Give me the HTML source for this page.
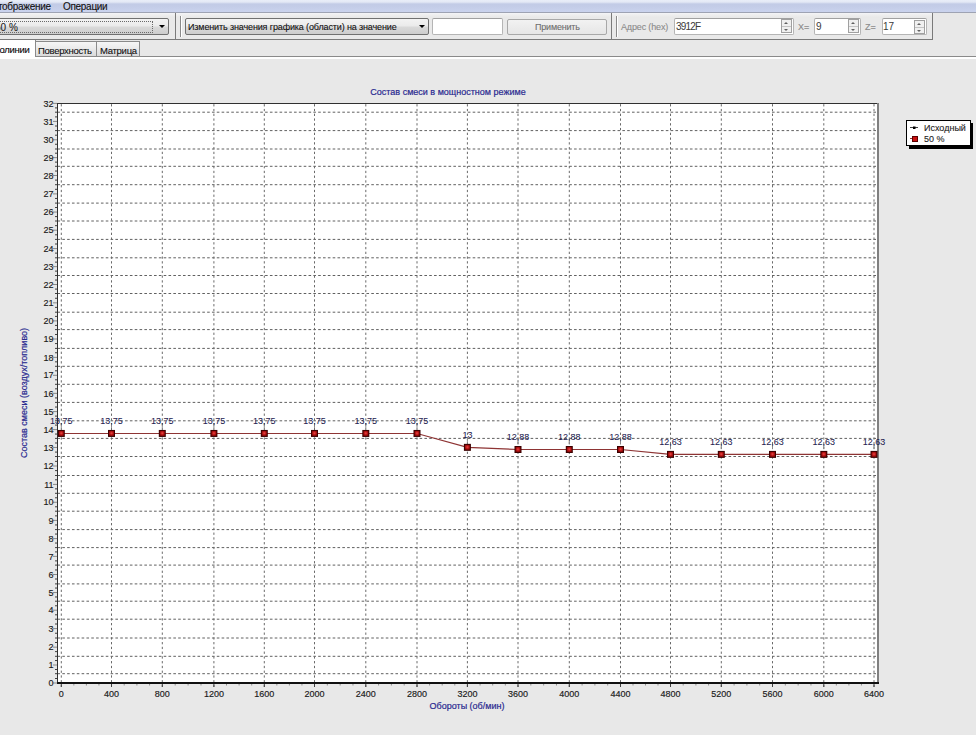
<!DOCTYPE html>
<html><head><meta charset="utf-8">
<style>
*{margin:0;padding:0;box-sizing:border-box}
html,body{width:976px;height:735px;overflow:hidden;background:#e8e8e8;font-family:"Liberation Sans", sans-serif;}
.abs{position:absolute}
#menu{position:absolute;left:0;top:0;width:976px;height:13px;background:linear-gradient(#e9eef8 0,#e4e9f5 2px,#c2cbe6 4px,#c4cde8 7px,#cad3ee 12px);border-bottom:1px solid #9ea3b3;}
.mt{position:absolute;top:0.5px;font-size:10px;letter-spacing:-0.3px;line-height:12px;color:#111;-webkit-text-stroke:0.1px #111;white-space:nowrap}
#tb{position:absolute;left:0;top:13px;width:933px;height:27px;background:linear-gradient(#f4f5f8 0,#eeeeee 2px,#e9e9e9 4px,#e9e9e9);border-bottom:1px solid #7a7a7a;border-right:1px solid #7a7a7a}
.vsep{position:absolute;top:13px;width:1px;height:26px;background:#7a7a7a}
.grip{position:absolute;top:16px;width:2px;height:21px;border-left:1px solid #8a8a8a;border-right:1px solid #fff}
.combo{position:absolute;top:18px;height:17px;border:1px solid #707070;border-radius:2px;background:linear-gradient(#f3f3f3,#ebebeb 45%,#d9d9d9 55%,#cdcdcd)}
.arrow{position:absolute;width:0;height:0;border-left:3px solid transparent;border-right:3px solid transparent;border-top:3px solid #000}
.ut{position:absolute;font-size:9px;line-height:11px;white-space:nowrap;color:#111;-webkit-text-stroke:0.1px currentColor}
.edit{position:absolute;top:18px;height:17px;background:#fff;border:1px solid #b5b5b5;border-top-color:#a0a0a0;border-radius:2px}
.spinb{position:absolute;width:11px;height:14px;border:1px solid #a0a0a0;background:#f0f0f0}
.spinb:before{content:"";position:absolute;left:0;top:6px;width:9px;height:1px;background:#c4c4c4}
.au{position:absolute;left:2px;top:2px;width:0;height:0;border-left:2.5px solid transparent;border-right:2.5px solid transparent;border-bottom:2.5px solid #606060}
.ad{position:absolute;left:2px;top:8.5px;width:0;height:0;border-left:2.5px solid transparent;border-right:2.5px solid transparent;border-top:2.5px solid #606060}
.tab{position:absolute;height:15px;border:1px solid #8a8a8a;border-bottom:none;background:linear-gradient(#f6f6f6,#ececec 40%,#dadada)}
svg text{font-family:"Liberation Sans", sans-serif}
.g{stroke:#606060;stroke-width:1;stroke-dasharray:2.6 2.228;}
.gv{stroke:#6a6a6a;stroke-width:1;stroke-dasharray:2.3 2.46;}
.yl{font-size:9px;fill:#1a1a1a;stroke:#1a1a1a;stroke-width:0.15px;text-anchor:end}
.xl{font-size:9px;fill:#1a1a1a;stroke:#1a1a1a;stroke-width:0.15px;text-anchor:middle}
.ml{font-size:9px;fill:#1e2250;stroke:#1e2250;stroke-width:0.05px;text-anchor:middle}
.t{font-size:9px;fill:#2a2a90;stroke:#2a2a90;stroke-width:0.2px;text-anchor:middle}
.lg{font-size:9px;fill:#222;stroke:#222;stroke-width:0.1px}
</style></head><body>
<div id="menu">
  <div class="mt" style="left:-9.6px">Отображение</div>
  <div class="mt" style="left:63px">Операции</div>
</div>
<div id="tb"></div>
<!-- band 1 -->
<div class="combo" style="left:-4px;width:173px"></div>
<div class="abs" style="left:-2px;top:21px;width:155px;height:12px;border:1px dotted #6a6a6a"></div>
<div class="ut" style="left:-5px;top:22.3px;font-size:10px;color:#222">50 %</div>
<div class="arrow" style="left:159px;top:25px"></div>
<div class="vsep" style="left:175px"></div>
<!-- band 2 -->
<div class="grip" style="left:180px"></div>
<div class="combo" style="left:185px;width:244px"></div>
<div class="ut" style="left:188px;top:22px;letter-spacing:-0.13px">Изменить значения графика (области) на значение</div>
<div class="arrow" style="left:419px;top:25px"></div>
<div class="edit" style="left:432px;width:71px"></div>
<div class="combo" style="left:507px;width:100px;top:19px;height:16px;border-color:#a8a8a8;background:linear-gradient(#f2f2f2,#e6e6e6)"></div>
<div class="ut" style="left:535px;top:22px;color:#6d6d6d;letter-spacing:-0.2px">Применить</div>
<div class="vsep" style="left:611px"></div>
<!-- band 3 -->
<div class="grip" style="left:616px"></div>
<div class="ut" style="left:621px;top:21.5px;color:#8a8a8a;letter-spacing:-0.15px">Адрес (hex)</div>
<div class="edit" style="left:674px;width:120px"></div>
<div class="ut" style="left:676px;top:20.7px;font-size:10px;color:#3a3a3a;letter-spacing:-0.8px;-webkit-text-stroke:0">3912F</div>
<div class="spinb" style="left:781px;top:19px"><i class="au"></i><i class="ad"></i></div>
<div class="ut" style="left:798px;top:21.5px;color:#8a8a8a">X=</div>
<div class="edit" style="left:814px;width:47px"></div>
<div class="ut" style="left:816px;top:20.7px;font-size:10px;color:#3a3a3a;-webkit-text-stroke:0">9</div>
<div class="spinb" style="left:848px;top:19px"><i class="au"></i><i class="ad"></i></div>
<div class="ut" style="left:865px;top:21.5px;color:#8a8a8a">Z=</div>
<div class="edit" style="left:882px;width:45px"></div>
<div class="ut" style="left:883px;top:20.7px;font-size:10px;color:#3a3a3a;-webkit-text-stroke:0">17</div>
<div class="spinb" style="left:914px;top:20px"><i class="au"></i><i class="ad"></i></div>
<!-- tabs -->
<div class="abs" style="left:0;top:56px;width:976px;height:1px;background:#8a8a8a"></div>
<div class="abs" style="left:0;top:57px;width:976px;height:2px;background:#fff"></div>
<div class="tab" style="left:35px;top:41px;width:62px"></div>
<div class="tab" style="left:96px;top:41px;width:44px"></div>
<div class="abs" style="left:0;top:40px;width:35px;height:19px;background:#fff"></div>
<div class="abs" style="left:35px;top:40px;width:1px;height:17px;background:#8a8a8a"></div>
<div class="ut" style="left:-11px;top:44px;color:#000;font-size:9.5px;letter-spacing:-0.28px">Изолинии</div>
<div class="ut" style="left:38px;top:44.5px;font-size:9.5px;letter-spacing:-0.28px">Поверхность</div>
<div class="ut" style="left:100px;top:44.5px;font-size:9.5px;letter-spacing:-0.28px">Матрица</div>
<svg class="abs" style="left:0;top:0" width="976" height="735" viewBox="0 0 976 735">
<rect x="58" y="104" width="820" height="579" fill="#ffffff"/>
<line x1="57.47" y1="673.70" x2="877" y2="673.70" class="g"/>
<line x1="57.47" y1="656.30" x2="877" y2="656.30" class="g"/>
<line x1="57.47" y1="638.00" x2="877" y2="638.00" class="g"/>
<line x1="57.47" y1="619.20" x2="877" y2="619.20" class="g"/>
<line x1="57.47" y1="601.20" x2="877" y2="601.20" class="g"/>
<line x1="57.47" y1="583.90" x2="877" y2="583.90" class="g"/>
<line x1="57.47" y1="565.10" x2="877" y2="565.10" class="g"/>
<line x1="57.47" y1="547.60" x2="877" y2="547.60" class="g"/>
<line x1="57.47" y1="529.60" x2="877" y2="529.60" class="g"/>
<line x1="57.47" y1="511.20" x2="877" y2="511.20" class="g"/>
<line x1="57.47" y1="493.30" x2="877" y2="493.30" class="g"/>
<line x1="57.47" y1="475.50" x2="877" y2="475.50" class="g"/>
<line x1="57.47" y1="456.50" x2="877" y2="456.50" class="g"/>
<line x1="57.47" y1="438.40" x2="877" y2="438.40" class="g"/>
<line x1="57.47" y1="420.80" x2="877" y2="420.80" class="g"/>
<line x1="57.47" y1="402.40" x2="877" y2="402.40" class="g"/>
<line x1="57.47" y1="384.30" x2="877" y2="384.30" class="g"/>
<line x1="57.47" y1="366.30" x2="877" y2="366.30" class="g"/>
<line x1="57.47" y1="348.40" x2="877" y2="348.40" class="g"/>
<line x1="57.47" y1="329.60" x2="877" y2="329.60" class="g"/>
<line x1="57.47" y1="312.20" x2="877" y2="312.20" class="g"/>
<line x1="57.47" y1="293.50" x2="877" y2="293.50" class="g"/>
<line x1="57.47" y1="275.50" x2="877" y2="275.50" class="g"/>
<line x1="57.47" y1="257.80" x2="877" y2="257.80" class="g"/>
<line x1="57.47" y1="239.40" x2="877" y2="239.40" class="g"/>
<line x1="57.47" y1="221.00" x2="877" y2="221.00" class="g"/>
<line x1="57.47" y1="203.10" x2="877" y2="203.10" class="g"/>
<line x1="57.47" y1="184.70" x2="877" y2="184.70" class="g"/>
<line x1="57.47" y1="166.30" x2="877" y2="166.30" class="g"/>
<line x1="57.47" y1="149.00" x2="877" y2="149.00" class="g"/>
<line x1="57.47" y1="130.60" x2="877" y2="130.60" class="g"/>
<line x1="57.47" y1="112.20" x2="877" y2="112.20" class="g"/>
<line x1="61.30" y1="104.15" x2="61.30" y2="687" class="gv"/>
<line x1="111.50" y1="104.15" x2="111.50" y2="687" class="gv"/>
<line x1="162.30" y1="104.15" x2="162.30" y2="687" class="gv"/>
<line x1="213.90" y1="104.15" x2="213.90" y2="687" class="gv"/>
<line x1="264.30" y1="104.15" x2="264.30" y2="687" class="gv"/>
<line x1="314.50" y1="104.15" x2="314.50" y2="687" class="gv"/>
<line x1="365.80" y1="104.15" x2="365.80" y2="687" class="gv"/>
<line x1="417.00" y1="104.15" x2="417.00" y2="687" class="gv"/>
<line x1="467.40" y1="104.15" x2="467.40" y2="687" class="gv"/>
<line x1="518.00" y1="104.15" x2="518.00" y2="687" class="gv"/>
<line x1="569.30" y1="104.15" x2="569.30" y2="687" class="gv"/>
<line x1="620.50" y1="104.15" x2="620.50" y2="687" class="gv"/>
<line x1="670.50" y1="104.15" x2="670.50" y2="687" class="gv"/>
<line x1="721.30" y1="104.15" x2="721.30" y2="687" class="gv"/>
<line x1="772.50" y1="104.15" x2="772.50" y2="687" class="gv"/>
<line x1="823.80" y1="104.15" x2="823.80" y2="687" class="gv"/>
<line x1="874.00" y1="104.15" x2="874.00" y2="687" class="gv"/>
<line x1="57" y1="103.5" x2="879" y2="103.5" stroke="#303030" stroke-width="1"/>
<rect x="877" y="103" width="2" height="580" fill="#808080"/>
<line x1="57.5" y1="103" x2="57.5" y2="684" stroke="#303030" stroke-width="1"/>
<rect x="57" y="682" width="822" height="2" fill="#101010"/>
<line x1="53" y1="683.00" x2="57" y2="683.00" stroke="#888888"/>
<line x1="55" y1="678.50" x2="57" y2="678.50" stroke="#404040"/>
<line x1="55" y1="673.70" x2="57" y2="673.70" stroke="#404040"/>
<line x1="55" y1="669.50" x2="57" y2="669.50" stroke="#404040"/>
<line x1="53" y1="665.00" x2="57" y2="665.00" stroke="#888888"/>
<line x1="55" y1="660.54" x2="57" y2="660.54" stroke="#404040"/>
<line x1="55" y1="656.30" x2="57" y2="656.30" stroke="#404040"/>
<line x1="55" y1="651.61" x2="57" y2="651.61" stroke="#404040"/>
<line x1="53" y1="647.15" x2="57" y2="647.15" stroke="#888888"/>
<line x1="55" y1="642.51" x2="57" y2="642.51" stroke="#404040"/>
<line x1="55" y1="638.00" x2="57" y2="638.00" stroke="#404040"/>
<line x1="55" y1="633.24" x2="57" y2="633.24" stroke="#404040"/>
<line x1="53" y1="628.60" x2="57" y2="628.60" stroke="#888888"/>
<line x1="55" y1="624.00" x2="57" y2="624.00" stroke="#404040"/>
<line x1="55" y1="619.20" x2="57" y2="619.20" stroke="#404040"/>
<line x1="55" y1="614.80" x2="57" y2="614.80" stroke="#404040"/>
<line x1="53" y1="610.20" x2="57" y2="610.20" stroke="#888888"/>
<line x1="55" y1="605.79" x2="57" y2="605.79" stroke="#404040"/>
<line x1="55" y1="601.20" x2="57" y2="601.20" stroke="#404040"/>
<line x1="55" y1="596.96" x2="57" y2="596.96" stroke="#404040"/>
<line x1="53" y1="592.55" x2="57" y2="592.55" stroke="#888888"/>
<line x1="55" y1="588.04" x2="57" y2="588.04" stroke="#404040"/>
<line x1="55" y1="583.90" x2="57" y2="583.90" stroke="#404040"/>
<line x1="55" y1="579.01" x2="57" y2="579.01" stroke="#404040"/>
<line x1="53" y1="574.50" x2="57" y2="574.50" stroke="#888888"/>
<line x1="55" y1="569.96" x2="57" y2="569.96" stroke="#404040"/>
<line x1="55" y1="565.10" x2="57" y2="565.10" stroke="#404040"/>
<line x1="55" y1="560.89" x2="57" y2="560.89" stroke="#404040"/>
<line x1="53" y1="556.35" x2="57" y2="556.35" stroke="#888888"/>
<line x1="55" y1="551.91" x2="57" y2="551.91" stroke="#404040"/>
<line x1="55" y1="547.60" x2="57" y2="547.60" stroke="#404040"/>
<line x1="55" y1="543.04" x2="57" y2="543.04" stroke="#404040"/>
<line x1="53" y1="538.60" x2="57" y2="538.60" stroke="#888888"/>
<line x1="55" y1="534.05" x2="57" y2="534.05" stroke="#404040"/>
<line x1="55" y1="529.60" x2="57" y2="529.60" stroke="#404040"/>
<line x1="55" y1="524.95" x2="57" y2="524.95" stroke="#404040"/>
<line x1="53" y1="520.40" x2="57" y2="520.40" stroke="#888888"/>
<line x1="55" y1="515.86" x2="57" y2="515.86" stroke="#404040"/>
<line x1="55" y1="511.20" x2="57" y2="511.20" stroke="#404040"/>
<line x1="55" y1="506.79" x2="57" y2="506.79" stroke="#404040"/>
<line x1="53" y1="502.25" x2="57" y2="502.25" stroke="#888888"/>
<line x1="55" y1="497.79" x2="57" y2="497.79" stroke="#404040"/>
<line x1="55" y1="493.30" x2="57" y2="493.30" stroke="#404040"/>
<line x1="55" y1="488.86" x2="57" y2="488.86" stroke="#404040"/>
<line x1="53" y1="484.40" x2="57" y2="484.40" stroke="#888888"/>
<line x1="55" y1="479.80" x2="57" y2="479.80" stroke="#404040"/>
<line x1="55" y1="475.50" x2="57" y2="475.50" stroke="#404040"/>
<line x1="55" y1="470.60" x2="57" y2="470.60" stroke="#404040"/>
<line x1="53" y1="466.00" x2="57" y2="466.00" stroke="#888888"/>
<line x1="55" y1="461.36" x2="57" y2="461.36" stroke="#404040"/>
<line x1="55" y1="456.50" x2="57" y2="456.50" stroke="#404040"/>
<line x1="55" y1="452.09" x2="57" y2="452.09" stroke="#404040"/>
<line x1="53" y1="447.45" x2="57" y2="447.45" stroke="#888888"/>
<line x1="55" y1="442.99" x2="57" y2="442.99" stroke="#404040"/>
<line x1="55" y1="438.40" x2="57" y2="438.40" stroke="#404040"/>
<line x1="55" y1="434.06" x2="57" y2="434.06" stroke="#404040"/>
<line x1="53" y1="429.60" x2="57" y2="429.60" stroke="#888888"/>
<line x1="55" y1="425.10" x2="57" y2="425.10" stroke="#404040"/>
<line x1="55" y1="420.80" x2="57" y2="420.80" stroke="#404040"/>
<line x1="55" y1="416.10" x2="57" y2="416.10" stroke="#404040"/>
<line x1="53" y1="411.60" x2="57" y2="411.60" stroke="#888888"/>
<line x1="55" y1="407.04" x2="57" y2="407.04" stroke="#404040"/>
<line x1="55" y1="402.40" x2="57" y2="402.40" stroke="#404040"/>
<line x1="55" y1="397.91" x2="57" y2="397.91" stroke="#404040"/>
<line x1="53" y1="393.35" x2="57" y2="393.35" stroke="#888888"/>
<line x1="55" y1="388.84" x2="57" y2="388.84" stroke="#404040"/>
<line x1="55" y1="384.30" x2="57" y2="384.30" stroke="#404040"/>
<line x1="55" y1="379.81" x2="57" y2="379.81" stroke="#404040"/>
<line x1="53" y1="375.30" x2="57" y2="375.30" stroke="#888888"/>
<line x1="55" y1="370.81" x2="57" y2="370.81" stroke="#404040"/>
<line x1="55" y1="366.30" x2="57" y2="366.30" stroke="#404040"/>
<line x1="55" y1="361.84" x2="57" y2="361.84" stroke="#404040"/>
<line x1="53" y1="357.35" x2="57" y2="357.35" stroke="#888888"/>
<line x1="55" y1="352.76" x2="57" y2="352.76" stroke="#404040"/>
<line x1="55" y1="348.40" x2="57" y2="348.40" stroke="#404040"/>
<line x1="55" y1="343.59" x2="57" y2="343.59" stroke="#404040"/>
<line x1="53" y1="339.00" x2="57" y2="339.00" stroke="#888888"/>
<line x1="55" y1="334.48" x2="57" y2="334.48" stroke="#404040"/>
<line x1="55" y1="329.60" x2="57" y2="329.60" stroke="#404040"/>
<line x1="55" y1="325.42" x2="57" y2="325.42" stroke="#404040"/>
<line x1="53" y1="320.90" x2="57" y2="320.90" stroke="#888888"/>
<line x1="55" y1="316.39" x2="57" y2="316.39" stroke="#404040"/>
<line x1="55" y1="312.20" x2="57" y2="312.20" stroke="#404040"/>
<line x1="55" y1="307.36" x2="57" y2="307.36" stroke="#404040"/>
<line x1="53" y1="302.85" x2="57" y2="302.85" stroke="#888888"/>
<line x1="55" y1="298.26" x2="57" y2="298.26" stroke="#404040"/>
<line x1="55" y1="293.50" x2="57" y2="293.50" stroke="#404040"/>
<line x1="55" y1="289.09" x2="57" y2="289.09" stroke="#404040"/>
<line x1="53" y1="284.50" x2="57" y2="284.50" stroke="#888888"/>
<line x1="55" y1="280.04" x2="57" y2="280.04" stroke="#404040"/>
<line x1="55" y1="275.50" x2="57" y2="275.50" stroke="#404040"/>
<line x1="55" y1="271.11" x2="57" y2="271.11" stroke="#404040"/>
<line x1="53" y1="266.65" x2="57" y2="266.65" stroke="#888888"/>
<line x1="55" y1="262.14" x2="57" y2="262.14" stroke="#404040"/>
<line x1="55" y1="257.80" x2="57" y2="257.80" stroke="#404040"/>
<line x1="55" y1="253.11" x2="57" y2="253.11" stroke="#404040"/>
<line x1="53" y1="248.60" x2="57" y2="248.60" stroke="#888888"/>
<line x1="55" y1="244.00" x2="57" y2="244.00" stroke="#404040"/>
<line x1="55" y1="239.40" x2="57" y2="239.40" stroke="#404040"/>
<line x1="55" y1="234.80" x2="57" y2="234.80" stroke="#404040"/>
<line x1="53" y1="230.20" x2="57" y2="230.20" stroke="#888888"/>
<line x1="55" y1="225.66" x2="57" y2="225.66" stroke="#404040"/>
<line x1="55" y1="221.00" x2="57" y2="221.00" stroke="#404040"/>
<line x1="55" y1="216.59" x2="57" y2="216.59" stroke="#404040"/>
<line x1="53" y1="212.05" x2="57" y2="212.05" stroke="#888888"/>
<line x1="55" y1="207.51" x2="57" y2="207.51" stroke="#404040"/>
<line x1="55" y1="203.10" x2="57" y2="203.10" stroke="#404040"/>
<line x1="55" y1="198.44" x2="57" y2="198.44" stroke="#404040"/>
<line x1="53" y1="193.90" x2="57" y2="193.90" stroke="#888888"/>
<line x1="55" y1="189.30" x2="57" y2="189.30" stroke="#404040"/>
<line x1="55" y1="184.70" x2="57" y2="184.70" stroke="#404040"/>
<line x1="55" y1="180.10" x2="57" y2="180.10" stroke="#404040"/>
<line x1="53" y1="175.50" x2="57" y2="175.50" stroke="#888888"/>
<line x1="55" y1="171.04" x2="57" y2="171.04" stroke="#404040"/>
<line x1="55" y1="166.30" x2="57" y2="166.30" stroke="#404040"/>
<line x1="55" y1="162.11" x2="57" y2="162.11" stroke="#404040"/>
<line x1="53" y1="157.65" x2="57" y2="157.65" stroke="#888888"/>
<line x1="55" y1="153.19" x2="57" y2="153.19" stroke="#404040"/>
<line x1="55" y1="149.00" x2="57" y2="149.00" stroke="#404040"/>
<line x1="55" y1="144.26" x2="57" y2="144.26" stroke="#404040"/>
<line x1="53" y1="139.80" x2="57" y2="139.80" stroke="#888888"/>
<line x1="55" y1="135.20" x2="57" y2="135.20" stroke="#404040"/>
<line x1="55" y1="130.60" x2="57" y2="130.60" stroke="#404040"/>
<line x1="55" y1="126.00" x2="57" y2="126.00" stroke="#404040"/>
<line x1="53" y1="121.40" x2="57" y2="121.40" stroke="#888888"/>
<line x1="55" y1="116.90" x2="57" y2="116.90" stroke="#404040"/>
<line x1="55" y1="112.20" x2="57" y2="112.20" stroke="#404040"/>
<line x1="55" y1="107.90" x2="57" y2="107.90" stroke="#404040"/>
<line x1="53" y1="103.40" x2="57" y2="103.40" stroke="#888888"/>
<line x1="61.30" y1="684" x2="61.30" y2="687" stroke="#404040"/>
<line x1="73.85" y1="684" x2="73.85" y2="685.5" stroke="#909090"/>
<line x1="86.40" y1="684" x2="86.40" y2="685.5" stroke="#909090"/>
<line x1="98.95" y1="684" x2="98.95" y2="685.5" stroke="#909090"/>
<line x1="111.50" y1="684" x2="111.50" y2="687" stroke="#404040"/>
<line x1="124.20" y1="684" x2="124.20" y2="685.5" stroke="#909090"/>
<line x1="136.90" y1="684" x2="136.90" y2="685.5" stroke="#909090"/>
<line x1="149.60" y1="684" x2="149.60" y2="685.5" stroke="#909090"/>
<line x1="162.30" y1="684" x2="162.30" y2="687" stroke="#404040"/>
<line x1="175.20" y1="684" x2="175.20" y2="685.5" stroke="#909090"/>
<line x1="188.10" y1="684" x2="188.10" y2="685.5" stroke="#909090"/>
<line x1="201.00" y1="684" x2="201.00" y2="685.5" stroke="#909090"/>
<line x1="213.90" y1="684" x2="213.90" y2="687" stroke="#404040"/>
<line x1="226.50" y1="684" x2="226.50" y2="685.5" stroke="#909090"/>
<line x1="239.10" y1="684" x2="239.10" y2="685.5" stroke="#909090"/>
<line x1="251.70" y1="684" x2="251.70" y2="685.5" stroke="#909090"/>
<line x1="264.30" y1="684" x2="264.30" y2="687" stroke="#404040"/>
<line x1="276.85" y1="684" x2="276.85" y2="685.5" stroke="#909090"/>
<line x1="289.40" y1="684" x2="289.40" y2="685.5" stroke="#909090"/>
<line x1="301.95" y1="684" x2="301.95" y2="685.5" stroke="#909090"/>
<line x1="314.50" y1="684" x2="314.50" y2="687" stroke="#404040"/>
<line x1="327.32" y1="684" x2="327.32" y2="685.5" stroke="#909090"/>
<line x1="340.15" y1="684" x2="340.15" y2="685.5" stroke="#909090"/>
<line x1="352.98" y1="684" x2="352.98" y2="685.5" stroke="#909090"/>
<line x1="365.80" y1="684" x2="365.80" y2="687" stroke="#404040"/>
<line x1="378.60" y1="684" x2="378.60" y2="685.5" stroke="#909090"/>
<line x1="391.40" y1="684" x2="391.40" y2="685.5" stroke="#909090"/>
<line x1="404.20" y1="684" x2="404.20" y2="685.5" stroke="#909090"/>
<line x1="417.00" y1="684" x2="417.00" y2="687" stroke="#404040"/>
<line x1="429.60" y1="684" x2="429.60" y2="685.5" stroke="#909090"/>
<line x1="442.20" y1="684" x2="442.20" y2="685.5" stroke="#909090"/>
<line x1="454.80" y1="684" x2="454.80" y2="685.5" stroke="#909090"/>
<line x1="467.40" y1="684" x2="467.40" y2="687" stroke="#404040"/>
<line x1="480.05" y1="684" x2="480.05" y2="685.5" stroke="#909090"/>
<line x1="492.70" y1="684" x2="492.70" y2="685.5" stroke="#909090"/>
<line x1="505.35" y1="684" x2="505.35" y2="685.5" stroke="#909090"/>
<line x1="518.00" y1="684" x2="518.00" y2="687" stroke="#404040"/>
<line x1="530.83" y1="684" x2="530.83" y2="685.5" stroke="#909090"/>
<line x1="543.65" y1="684" x2="543.65" y2="685.5" stroke="#909090"/>
<line x1="556.47" y1="684" x2="556.47" y2="685.5" stroke="#909090"/>
<line x1="569.30" y1="684" x2="569.30" y2="687" stroke="#404040"/>
<line x1="582.10" y1="684" x2="582.10" y2="685.5" stroke="#909090"/>
<line x1="594.90" y1="684" x2="594.90" y2="685.5" stroke="#909090"/>
<line x1="607.70" y1="684" x2="607.70" y2="685.5" stroke="#909090"/>
<line x1="620.50" y1="684" x2="620.50" y2="687" stroke="#404040"/>
<line x1="633.00" y1="684" x2="633.00" y2="685.5" stroke="#909090"/>
<line x1="645.50" y1="684" x2="645.50" y2="685.5" stroke="#909090"/>
<line x1="658.00" y1="684" x2="658.00" y2="685.5" stroke="#909090"/>
<line x1="670.50" y1="684" x2="670.50" y2="687" stroke="#404040"/>
<line x1="683.20" y1="684" x2="683.20" y2="685.5" stroke="#909090"/>
<line x1="695.90" y1="684" x2="695.90" y2="685.5" stroke="#909090"/>
<line x1="708.60" y1="684" x2="708.60" y2="685.5" stroke="#909090"/>
<line x1="721.30" y1="684" x2="721.30" y2="687" stroke="#404040"/>
<line x1="734.10" y1="684" x2="734.10" y2="685.5" stroke="#909090"/>
<line x1="746.90" y1="684" x2="746.90" y2="685.5" stroke="#909090"/>
<line x1="759.70" y1="684" x2="759.70" y2="685.5" stroke="#909090"/>
<line x1="772.50" y1="684" x2="772.50" y2="687" stroke="#404040"/>
<line x1="785.33" y1="684" x2="785.33" y2="685.5" stroke="#909090"/>
<line x1="798.15" y1="684" x2="798.15" y2="685.5" stroke="#909090"/>
<line x1="810.97" y1="684" x2="810.97" y2="685.5" stroke="#909090"/>
<line x1="823.80" y1="684" x2="823.80" y2="687" stroke="#404040"/>
<line x1="836.35" y1="684" x2="836.35" y2="685.5" stroke="#909090"/>
<line x1="848.90" y1="684" x2="848.90" y2="685.5" stroke="#909090"/>
<line x1="861.45" y1="684" x2="861.45" y2="685.5" stroke="#909090"/>
<line x1="874.00" y1="684" x2="874.00" y2="687" stroke="#404040"/>
<text x="53.5" y="686.1" class="yl">0</text>
<text x="53.5" y="668.1" class="yl">1</text>
<text x="53.5" y="650.2" class="yl">2</text>
<text x="53.5" y="631.7" class="yl">3</text>
<text x="53.5" y="613.3" class="yl">4</text>
<text x="53.5" y="595.6" class="yl">5</text>
<text x="53.5" y="577.6" class="yl">6</text>
<text x="53.5" y="559.5" class="yl">7</text>
<text x="53.5" y="541.7" class="yl">8</text>
<text x="53.5" y="523.5" class="yl">9</text>
<text x="53.5" y="505.4" class="yl">10</text>
<text x="53.5" y="487.5" class="yl">11</text>
<text x="53.5" y="469.1" class="yl">12</text>
<text x="53.5" y="450.6" class="yl">13</text>
<text x="53.5" y="432.7" class="yl">14</text>
<text x="53.5" y="414.7" class="yl">15</text>
<text x="53.5" y="396.5" class="yl">16</text>
<text x="53.5" y="378.4" class="yl">17</text>
<text x="53.5" y="360.5" class="yl">18</text>
<text x="53.5" y="342.1" class="yl">19</text>
<text x="53.5" y="324.0" class="yl">20</text>
<text x="53.5" y="306.0" class="yl">21</text>
<text x="53.5" y="287.6" class="yl">22</text>
<text x="53.5" y="269.8" class="yl">23</text>
<text x="53.5" y="251.7" class="yl">24</text>
<text x="53.5" y="233.3" class="yl">25</text>
<text x="53.5" y="215.2" class="yl">26</text>
<text x="53.5" y="197.0" class="yl">27</text>
<text x="53.5" y="178.6" class="yl">28</text>
<text x="53.5" y="160.8" class="yl">29</text>
<text x="53.5" y="142.9" class="yl">30</text>
<text x="53.5" y="124.5" class="yl">31</text>
<text x="53.5" y="106.5" class="yl">32</text>
<text x="61.3" y="697.3" class="xl">0</text>
<text x="111.5" y="697.3" class="xl">400</text>
<text x="162.3" y="697.3" class="xl">800</text>
<text x="213.9" y="697.3" class="xl">1200</text>
<text x="264.3" y="697.3" class="xl">1600</text>
<text x="314.5" y="697.3" class="xl">2000</text>
<text x="365.8" y="697.3" class="xl">2400</text>
<text x="417.0" y="697.3" class="xl">2800</text>
<text x="467.4" y="697.3" class="xl">3200</text>
<text x="518.0" y="697.3" class="xl">3600</text>
<text x="569.3" y="697.3" class="xl">4000</text>
<text x="620.5" y="697.3" class="xl">4400</text>
<text x="670.5" y="697.3" class="xl">4800</text>
<text x="721.3" y="697.3" class="xl">5200</text>
<text x="772.5" y="697.3" class="xl">5600</text>
<text x="823.8" y="697.3" class="xl">6000</text>
<text x="874.0" y="697.3" class="xl">6400</text>
<path d="M61.30,433.45 L111.50,433.45 L162.30,433.45 L213.90,433.45 L264.30,433.45 L314.50,433.45 L365.80,433.45 L417.00,433.45 L467.40,447.35 L518.00,449.50 L569.30,449.50 L620.50,449.50 L670.50,454.40 L721.30,454.40 L772.50,454.40 L823.80,454.40 L874.00,454.40" fill="none" stroke="#8e3434" stroke-width="1.1"/>
<line x1="61.30" y1="423.4" x2="61.30" y2="427.9" stroke="#8a8a8a"/>
<text x="61.3" y="423.8" class="ml">13,75</text>
<line x1="111.50" y1="423.4" x2="111.50" y2="427.9" stroke="#8a8a8a"/>
<text x="111.5" y="423.8" class="ml">13,75</text>
<line x1="162.30" y1="423.4" x2="162.30" y2="427.9" stroke="#8a8a8a"/>
<text x="162.3" y="423.8" class="ml">13,75</text>
<line x1="213.90" y1="423.4" x2="213.90" y2="427.9" stroke="#8a8a8a"/>
<text x="213.9" y="423.8" class="ml">13,75</text>
<line x1="264.30" y1="423.4" x2="264.30" y2="427.9" stroke="#8a8a8a"/>
<text x="264.3" y="423.8" class="ml">13,75</text>
<line x1="314.50" y1="423.4" x2="314.50" y2="427.9" stroke="#8a8a8a"/>
<text x="314.5" y="423.8" class="ml">13,75</text>
<line x1="365.80" y1="423.4" x2="365.80" y2="427.9" stroke="#8a8a8a"/>
<text x="365.8" y="423.8" class="ml">13,75</text>
<line x1="417.00" y1="423.4" x2="417.00" y2="427.9" stroke="#8a8a8a"/>
<text x="417.0" y="423.8" class="ml">13,75</text>
<line x1="467.40" y1="437.4" x2="467.40" y2="441.9" stroke="#8a8a8a"/>
<text x="467.4" y="437.7" class="ml">13</text>
<line x1="518.00" y1="439.5" x2="518.00" y2="444.0" stroke="#8a8a8a"/>
<text x="518.0" y="439.8" class="ml">12,88</text>
<line x1="569.30" y1="439.5" x2="569.30" y2="444.0" stroke="#8a8a8a"/>
<text x="569.3" y="439.8" class="ml">12,88</text>
<line x1="620.50" y1="439.5" x2="620.50" y2="444.0" stroke="#8a8a8a"/>
<text x="620.5" y="439.8" class="ml">12,88</text>
<line x1="670.50" y1="444.4" x2="670.50" y2="448.9" stroke="#8a8a8a"/>
<text x="670.5" y="444.7" class="ml">12,63</text>
<line x1="721.30" y1="444.4" x2="721.30" y2="448.9" stroke="#8a8a8a"/>
<text x="721.3" y="444.7" class="ml">12,63</text>
<line x1="772.50" y1="444.4" x2="772.50" y2="448.9" stroke="#8a8a8a"/>
<text x="772.5" y="444.7" class="ml">12,63</text>
<line x1="823.80" y1="444.4" x2="823.80" y2="448.9" stroke="#8a8a8a"/>
<text x="823.8" y="444.7" class="ml">12,63</text>
<line x1="874.00" y1="444.4" x2="874.00" y2="448.9" stroke="#8a8a8a"/>
<text x="874.0" y="444.7" class="ml">12,63</text>
<rect x="57.80" y="429.95" width="7" height="7" fill="#3a0000"/>
<rect x="58.80" y="430.95" width="5" height="5" fill="url(#mg)"/>
<rect x="108.00" y="429.95" width="7" height="7" fill="#3a0000"/>
<rect x="109.00" y="430.95" width="5" height="5" fill="url(#mg)"/>
<rect x="158.80" y="429.95" width="7" height="7" fill="#3a0000"/>
<rect x="159.80" y="430.95" width="5" height="5" fill="url(#mg)"/>
<rect x="210.40" y="429.95" width="7" height="7" fill="#3a0000"/>
<rect x="211.40" y="430.95" width="5" height="5" fill="url(#mg)"/>
<rect x="260.80" y="429.95" width="7" height="7" fill="#3a0000"/>
<rect x="261.80" y="430.95" width="5" height="5" fill="url(#mg)"/>
<rect x="311.00" y="429.95" width="7" height="7" fill="#3a0000"/>
<rect x="312.00" y="430.95" width="5" height="5" fill="url(#mg)"/>
<rect x="362.30" y="429.95" width="7" height="7" fill="#3a0000"/>
<rect x="363.30" y="430.95" width="5" height="5" fill="url(#mg)"/>
<rect x="413.50" y="429.95" width="7" height="7" fill="#3a0000"/>
<rect x="414.50" y="430.95" width="5" height="5" fill="url(#mg)"/>
<rect x="463.90" y="443.85" width="7" height="7" fill="#3a0000"/>
<rect x="464.90" y="444.85" width="5" height="5" fill="url(#mg)"/>
<rect x="514.50" y="446.00" width="7" height="7" fill="#3a0000"/>
<rect x="515.50" y="447.00" width="5" height="5" fill="url(#mg)"/>
<rect x="565.80" y="446.00" width="7" height="7" fill="#3a0000"/>
<rect x="566.80" y="447.00" width="5" height="5" fill="url(#mg)"/>
<rect x="617.00" y="446.00" width="7" height="7" fill="#3a0000"/>
<rect x="618.00" y="447.00" width="5" height="5" fill="url(#mg)"/>
<rect x="667.00" y="450.90" width="7" height="7" fill="#3a0000"/>
<rect x="668.00" y="451.90" width="5" height="5" fill="url(#mg)"/>
<rect x="717.80" y="450.90" width="7" height="7" fill="#3a0000"/>
<rect x="718.80" y="451.90" width="5" height="5" fill="url(#mg)"/>
<rect x="769.00" y="450.90" width="7" height="7" fill="#3a0000"/>
<rect x="770.00" y="451.90" width="5" height="5" fill="url(#mg)"/>
<rect x="820.30" y="450.90" width="7" height="7" fill="#3a0000"/>
<rect x="821.30" y="451.90" width="5" height="5" fill="url(#mg)"/>
<rect x="870.50" y="450.90" width="7" height="7" fill="#3a0000"/>
<rect x="871.50" y="451.90" width="5" height="5" fill="url(#mg)"/>
<defs><radialGradient id="mg" cx="0.5" cy="0.45" r="0.6"><stop offset="0" stop-color="#e84848"/><stop offset="0.55" stop-color="#b81414"/><stop offset="1" stop-color="#7a0606"/></radialGradient></defs>
<text x="448" y="95.3" class="t">Состав смеси в мощностном режиме</text>
<text x="467" y="708.5" class="t">Обороты (об/мин)</text>
<text transform="translate(26.8,393) rotate(-90)" x="0" y="0" class="t">Состав смеси (воздух/топливо)</text>
<rect x="909" y="123" width="64" height="26" fill="#000"/>
<rect x="906.5" y="120.5" width="64" height="25" fill="#fff" stroke="#000" stroke-width="1"/>
<line x1="910" y1="127.5" x2="918" y2="127.5" stroke="#404040"/>
<rect x="913" y="126.5" width="2.5" height="2.5" fill="#000"/>
<line x1="910" y1="138.5" x2="918" y2="138.5" stroke="#a03030"/>
<rect x="912" y="136" width="6" height="6" fill="#5a0000"/>
<rect x="913" y="137" width="4" height="4" fill="#c81010"/>
<text x="924" y="130.5" class="lg">Исходный</text>
<text x="924" y="141.5" class="lg">50 %</text>
</svg>
</body></html>
